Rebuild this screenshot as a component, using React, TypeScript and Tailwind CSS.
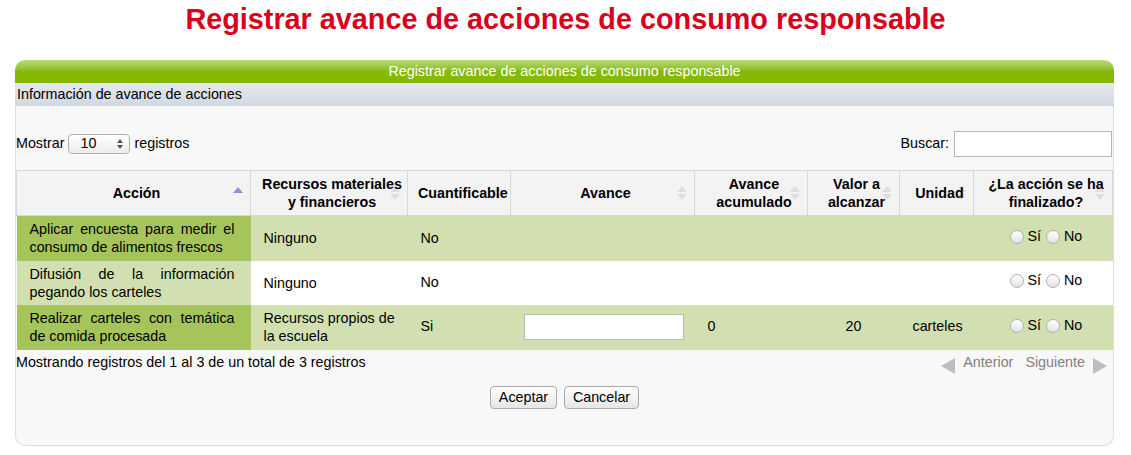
const font = "font-['Liberation_Sans',Arial,sans-serif]";

type Col = { label: string[]; width: number; sort: 'asc' | 'both' };

const columns: Col[] = [
  { label: ['Acción'], width: 234, sort: 'asc' },
  { label: ['Recursos materiales', 'y financieros'], width: 157, sort: 'both' },
  { label: ['Cuantificable'], width: 103, sort: 'both' },
  { label: ['Avance'], width: 184, sort: 'both' },
  { label: ['Avance', 'acumulado'], width: 113, sort: 'both' },
  { label: ['Valor a', 'alcanzar'], width: 92, sort: 'both' },
  { label: ['Unidad'], width: 74, sort: 'both' },
  { label: ['¿La acción se ha', 'finalizado?'], width: 139, sort: 'both' },
];

type Row = {
  accion: string;
  recursos: string;
  cuantificable: string;
  editable: boolean;
  acumulado?: string;
  valor?: string;
  unidad?: string;
  odd: boolean;
  height: number;
};

const rows: Row[] = [
  {
    accion: 'Aplicar encuesta para medir el consumo de alimentos frescos',
    recursos: 'Ninguno',
    cuantificable: 'No',
    editable: false,
    odd: true,
    height: 45,
  },
  {
    accion: 'Difusión de la información pegando los carteles',
    recursos: 'Ninguno',
    cuantificable: 'No',
    editable: false,
    odd: false,
    height: 44,
  },
  {
    accion: 'Realizar carteles con temática de comida procesada',
    recursos: 'Recursos propios de la escuela',
    cuantificable: 'Si',
    editable: true,
    acumulado: '0',
    valor: '20',
    unidad: 'carteles',
    odd: true,
    height: 45,
  },
];

function SortIcon({ kind }: { kind: 'asc' | 'both' }) {
  if (kind === 'asc') {
    return (
      <svg width="10" height="16" viewBox="0 0 10 16" className="absolute right-[7px] top-1/2 -translate-y-1/2">
        <polygon points="0,8 10,8 5,2" fill="#8f8fe0" />
      </svg>
    );
  }
  return (
    <svg width="10" height="16" viewBox="0 0 10 16" className="absolute right-[7px] top-1/2 -translate-y-1/2">
      <polygon points="0,7 10,7 5,1" fill="#dedede" />
      <polygon points="0,9 10,9 5,15" fill="#dedede" />
    </svg>
  );
}

function Radio({ label }: { label: string }) {
  return (
    <span className="inline-flex items-center gap-[4px]">
      <span className="w-[14px] h-[14px] rounded-full border border-[#b0b0b0] bg-linear-to-b from-[#ffffff] to-[#e2e2e2]" />
      <span>{label}</span>
    </span>
  );
}

export default function App() {
  return (
    <div className={`${font} bg-white w-[1131px] h-[455px] text-black`}>
      <div className="h-[60px] text-center">
        <h1 className="text-[28.8px] leading-[38px] font-bold text-[#d9001b]">
          Registrar avance de acciones de consumo responsable
        </h1>
      </div>

      <div className="ml-[15px] w-[1099px] text-[14.3px]">
        <div className="h-[23px] rounded-t-[10px] bg-linear-to-b from-[#b9dc72] via-[#86b905] to-[#84b800] text-white leading-[23px] text-center">
          Registrar avance de acciones de consumo responsable
        </div>
        <div className="h-[23px] bg-linear-to-b from-[#e6eaee] to-[#d0d8df] leading-[23px] pl-[2px]">
          Información de avance de acciones
        </div>

        <div className="bg-[#f8f8f8] border-x border-b border-[#dedede] rounded-b-[10px] pb-[36px]">
          <div className="flex items-center justify-between pt-[25px] h-[51px]">
            <div className="flex items-center gap-[4px]">
              <span>Mostrar</span>
              <span className="flex items-center justify-between w-[62px] h-[20px] rounded-[4px] border border-[#b0b0b0] bg-linear-to-b from-[#ffffff] to-[#ececec] pl-[11px] pr-[6px]">
                <span>10</span>
                <svg width="6" height="10" viewBox="0 0 6 10">
                  <polygon points="0,4 6,4 3,0" fill="#555" />
                  <polygon points="0,6 6,6 3,10" fill="#555" />
                </svg>
              </span>
              <span>registros</span>
            </div>
            <div className="flex items-center gap-[5px] pr-[1px]">
              <span>Buscar:</span>
              <span className="block w-[158px] h-[26px] bg-white border border-[#b5b5b5]" />
            </div>
          </div>

          <div className="pt-[13px]">
            <table className="w-[1096px] table-fixed border-collapse">
              <colgroup>
                {columns.map((c, i) => (
                  <col key={i} style={{ width: c.width }} />
                ))}
              </colgroup>
              <thead>
                <tr className="h-[45px]">
                  {columns.map((c, i) => (
                    <th
                      key={i}
                      className="relative bg-[#f3f3f3] border border-[#d8d8d8] pl-[10px] pr-[4px] font-bold leading-[18px] whitespace-nowrap"
                    >
                      <SortIcon kind={c.sort} />
                      <span className="relative block">
                        {c.label.map((l, j) => (
                          <span key={j} className="block">
                            {l}
                          </span>
                        ))}
                      </span>
                    </th>
                  ))}
                </tr>
              </thead>
              <tbody>
                {rows.map((r, i) => (
                  <tr key={i} style={{ height: r.height }} className={r.odd ? 'bg-[#d2e0b1]' : 'bg-white'}>
                    <td className={`${r.odd ? 'bg-[#a5c55b]' : 'bg-[#d2e0b1]'} pl-[13px] pr-[16px] leading-[18px] text-justify`}>
                      {r.accion}
                    </td>
                    <td className="pl-[13px] pr-[7px] leading-[18px]">{r.recursos}</td>
                    <td className="px-[13px]">{r.cuantificable}</td>
                    <td className="px-[13px]">
                      {r.editable && <span className="block w-[160px] h-[26px] bg-white border border-[#b8b8b8]" />}
                    </td>
                    <td className="px-[13px]">{r.acumulado}</td>
                    <td className="text-center">{r.valor}</td>
                    <td className="px-[13px]">{r.unidad}</td>
                    <td className="pl-[36px]">
                      <span className="inline-flex items-center gap-[5px]">
                        <Radio label="Sí" />
                        <Radio label="No" />
                      </span>
                    </td>
                  </tr>
                ))}
              </tbody>
            </table>
          </div>

          <div className="flex items-start justify-between h-[23px] pt-[2px]">
            <span>Mostrando registros del 1 al 3 de un total de 3 registros</span>
            <div className="flex items-center gap-[8px] text-[#808080] pr-[6px]">
              <svg width="14" height="16" viewBox="0 0 14 16" className="mt-[6px]">
                <polygon points="14,0 14,16 0,8" fill="#bdbdbd" />
              </svg>
              <span>Anterior</span>
              <span className="ml-[4px]">Siguiente</span>
              <svg width="14" height="16" viewBox="0 0 14 16" className="mt-[6px]">
                <polygon points="0,0 0,16 14,8" fill="#bdbdbd" />
              </svg>
            </div>
          </div>

          <div className="flex justify-center gap-[7px] pt-[13px]">
            <button className="h-[23px] w-[67px] rounded-[4px] border border-[#aaa] bg-linear-to-b from-[#ffffff] to-[#e6e6e6] leading-[21px]">
              Aceptar
            </button>
            <button className="h-[23px] w-[75px] rounded-[4px] border border-[#aaa] bg-linear-to-b from-[#ffffff] to-[#e6e6e6] leading-[21px]">
              Cancelar
            </button>
          </div>
        </div>
      </div>
    </div>
  );
}
